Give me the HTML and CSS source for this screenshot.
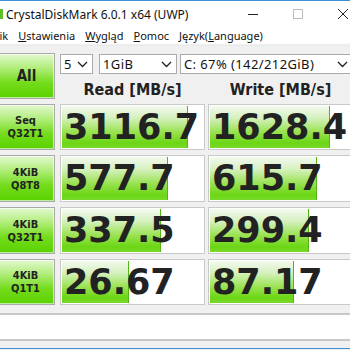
FILE: index.html
```html
<!DOCTYPE html>
<html>
<head>
<meta charset="utf-8">
<link rel="stylesheet" href="styles.css">
</head>
<body>
<div class="window">
  <div class="titlebar">
    <div class="appicon"></div>
    <span class="title">CrystalDiskMark 6.0.1 x64 (UWP)</span>
    <div class="caption">
      <svg class="cap-btn" width="12" height="12" viewBox="0 0 12 12"><line x1="1" y1="6.5" x2="11" y2="6.5" stroke="#222" stroke-width="1"/></svg>
      <svg class="cap-btn" width="12" height="12" viewBox="0 0 12 12"><rect x="1.5" y="1.5" width="9" height="9" fill="none" stroke="#bbb" stroke-width="1"/></svg>
      <svg class="cap-btn" width="12" height="12" viewBox="0 0 12 12"><path d="M1 1L11 11M11 1L1 11" stroke="#222" stroke-width="1"/></svg>
    </div>
  </div>
  <div class="menubar">
    <span class="mi"><u>P</u>lik</span>
    <span class="mi"><u>U</u>stawienia</span>
    <span class="mi"><u>W</u>ygląd</span>
    <span class="mi"><u>P</u>omoc</span>
    <span class="mi">Język(<u>L</u>anguage)</span>
  </div>
  <div class="sep"></div>
  <div class="main">
    <div class="btn all">All</div>
    <div class="controls">
      <div class="combos">
        <div class="combo c1"><span>5</span><svg width="11" height="7" viewBox="0 0 11 7"><polyline points="1,1 5.5,5.5 10,1" fill="none" stroke="#222" stroke-width="1.3"/></svg></div>
        <div class="combo c2"><span>1GiB</span><svg width="11" height="7" viewBox="0 0 11 7"><polyline points="1,1 5.5,5.5 10,1" fill="none" stroke="#222" stroke-width="1.3"/></svg></div>
        <div class="combo c3"><span>C: 67% (142/212GiB)</span><svg width="11" height="7" viewBox="0 0 11 7"><polyline points="1,1 5.5,5.5 10,1" fill="none" stroke="#222" stroke-width="1.3"/></svg></div>
      </div>
      <div class="heads">
        <div class="head">Read [MB/s]</div>
        <div class="head">Write [MB/s]</div>
      </div>
    </div>

    <div class="btn label">Seq<br>Q32T1</div>
    <div class="cell read"><div class="bar" style="width:88%"></div><span class="val">3116.7</span></div>
    <div class="cell write"><div class="bar" style="width:84%"></div><span class="val">1628.4</span></div>

    <div class="btn label">4KiB<br>Q8T8</div>
    <div class="cell read"><div class="bar" style="width:74%"></div><span class="val">577.7</span></div>
    <div class="cell write"><div class="bar" style="width:75%"></div><span class="val">615.7</span></div>

    <div class="btn label">4KiB<br>Q32T1</div>
    <div class="cell read"><div class="bar" style="width:69%"></div><span class="val">337.5</span></div>
    <div class="cell write"><div class="bar" style="width:69%"></div><span class="val">299.4</span></div>

    <div class="btn label">4KiB<br>Q1T1</div>
    <div class="cell read"><div class="bar" style="width:47%"></div><span class="val">26.67</span></div>
    <div class="cell write"><div class="bar" style="width:59%"></div><span class="val">87.17</span></div>
  </div>
  <div class="comment"></div>
  <div class="bottomline"></div>
</div>
</body>
</html>
```

FILE: styles.css
```css
html, body {
  margin: 0;
  padding: 0;
  width: 350px;
  height: 350px;
  overflow: hidden;
  background: #f0f0f0;
}
.window {
  width: 350px;
  height: 350px;
  overflow: hidden;
  display: flex;
  flex-direction: column;
  background: #f0f0f0;
  font-family: "Noto Sans", "DejaVu Sans", sans-serif;
}
.titlebar {
  height: 27px;
  border-top: 1px solid #3f8fd6;
  background: #fff;
  display: flex;
  align-items: center;
}
.appicon {
  width: 3px;
  height: 10px;
  background: #5cbf2a;
  margin-top: -1px;
}
.title {
  margin-left: 3px;
  font-size: 12px;
  color: #111;
  white-space: nowrap;
  margin-top: -1px;
}
.caption {
  margin-left: auto;
  display: flex;
  gap: 33px;
  margin-right: 1px;
  margin-top: -1px;
}
.menubar {
  height: 15px;
  background: #fff;
  display: flex;
  align-items: center;
  gap: 10px;
  font-size: 11px;
  color: #111;
  white-space: nowrap;
  margin-left: -10px;
}
.sep {
  height: 3px;
  background: linear-gradient(#fff, #e4e4e4);
}
.main {
  margin-left: -4px;
  margin-top: 7px;
  display: grid;
  grid-template-columns: 59px 150px 148px;
  grid-template-rows: 46px 46px 47px 47px 46px;
  row-gap: 5px;
}
.btn {
  box-sizing: border-box;
  border: 1px solid #a9a9a9;
  box-shadow: inset 0 0 0 1px rgba(255,255,255,0.6);
  background: linear-gradient(#e2f8d0 0%, #b4ee80 30%, #74dc1c 65%, #5ad200 100%);
  display: flex;
  align-items: center;
  justify-content: center;
  text-align: center;
  font-family: "DejaVu Sans Condensed", "DejaVu Sans", sans-serif;
  font-weight: bold;
  color: #222;
}
.all {
  font-size: 15px;
  padding-left: 2px;
}
.label {
  font-size: 11px;
  line-height: 13px;
}
.controls {
  grid-column: 2 / 4;
  display: flex;
  flex-direction: column;
}
.combos {
  display: flex;
  margin-top: 1px;
  margin-left: 5px;
}
.combo {
  box-sizing: border-box;
  height: 20px;
  border: 1px solid #ababab;
  background: #fff;
  display: flex;
  align-items: center;
  justify-content: space-between;
  padding: 0 4px 0 3px;
  font-size: 13px;
  letter-spacing: 0.4px;
  color: #111;
  white-space: nowrap;
}
.c1 { width: 33px; margin-right: 6px; }
.c2 { width: 78px; margin-right: 3px; }
.c3 { width: 173px; flex: none; }
.heads {
  display: grid;
  grid-template-columns: 145px 145px;
  column-gap: 3px;
  margin-left: 5px;
  margin-top: 6px;
}
.head {
  text-align: center;
  font-family: "DejaVu Sans Condensed", "DejaVu Sans", sans-serif;
  font-weight: bold;
  font-size: 16px;
  color: #222;
  white-space: nowrap;
}
.cell {
  position: relative;
  box-sizing: border-box;
  border: 1px solid #c9c9c9;
  background: #fff;
  overflow: hidden;
  display: flex;
  align-items: center;
}
.read { margin-left: 5px; }
.write { margin-left: 3px; }
.bar {
  position: absolute;
  left: 1px;
  top: 1px;
  bottom: 1px;
  box-sizing: border-box;
  background: linear-gradient(#f3f9ef 0%, #d6f1c0 28%, #99e250 62%, #6bd615 88%, #79d92a 100%);
  border-right: 1px solid #52b514;
}
.val {
  position: relative;
  padding-left: 3px;
  font-family: "DejaVu Sans", sans-serif;
  font-weight: bold;
  font-size: 35px;
  color: #222;
  white-space: nowrap;
  line-height: 1;
}
.comment {
  margin-top: 8px;
  height: 28px;
  box-sizing: border-box;
  border-top: 2px solid #c8c8c8;
  border-bottom: 2px solid #c8c8c8;
  background: #fff;
}
.bottomline {
  margin-top: 7px;
  height: 1px;
  background: #3f8fd6;
}
```
